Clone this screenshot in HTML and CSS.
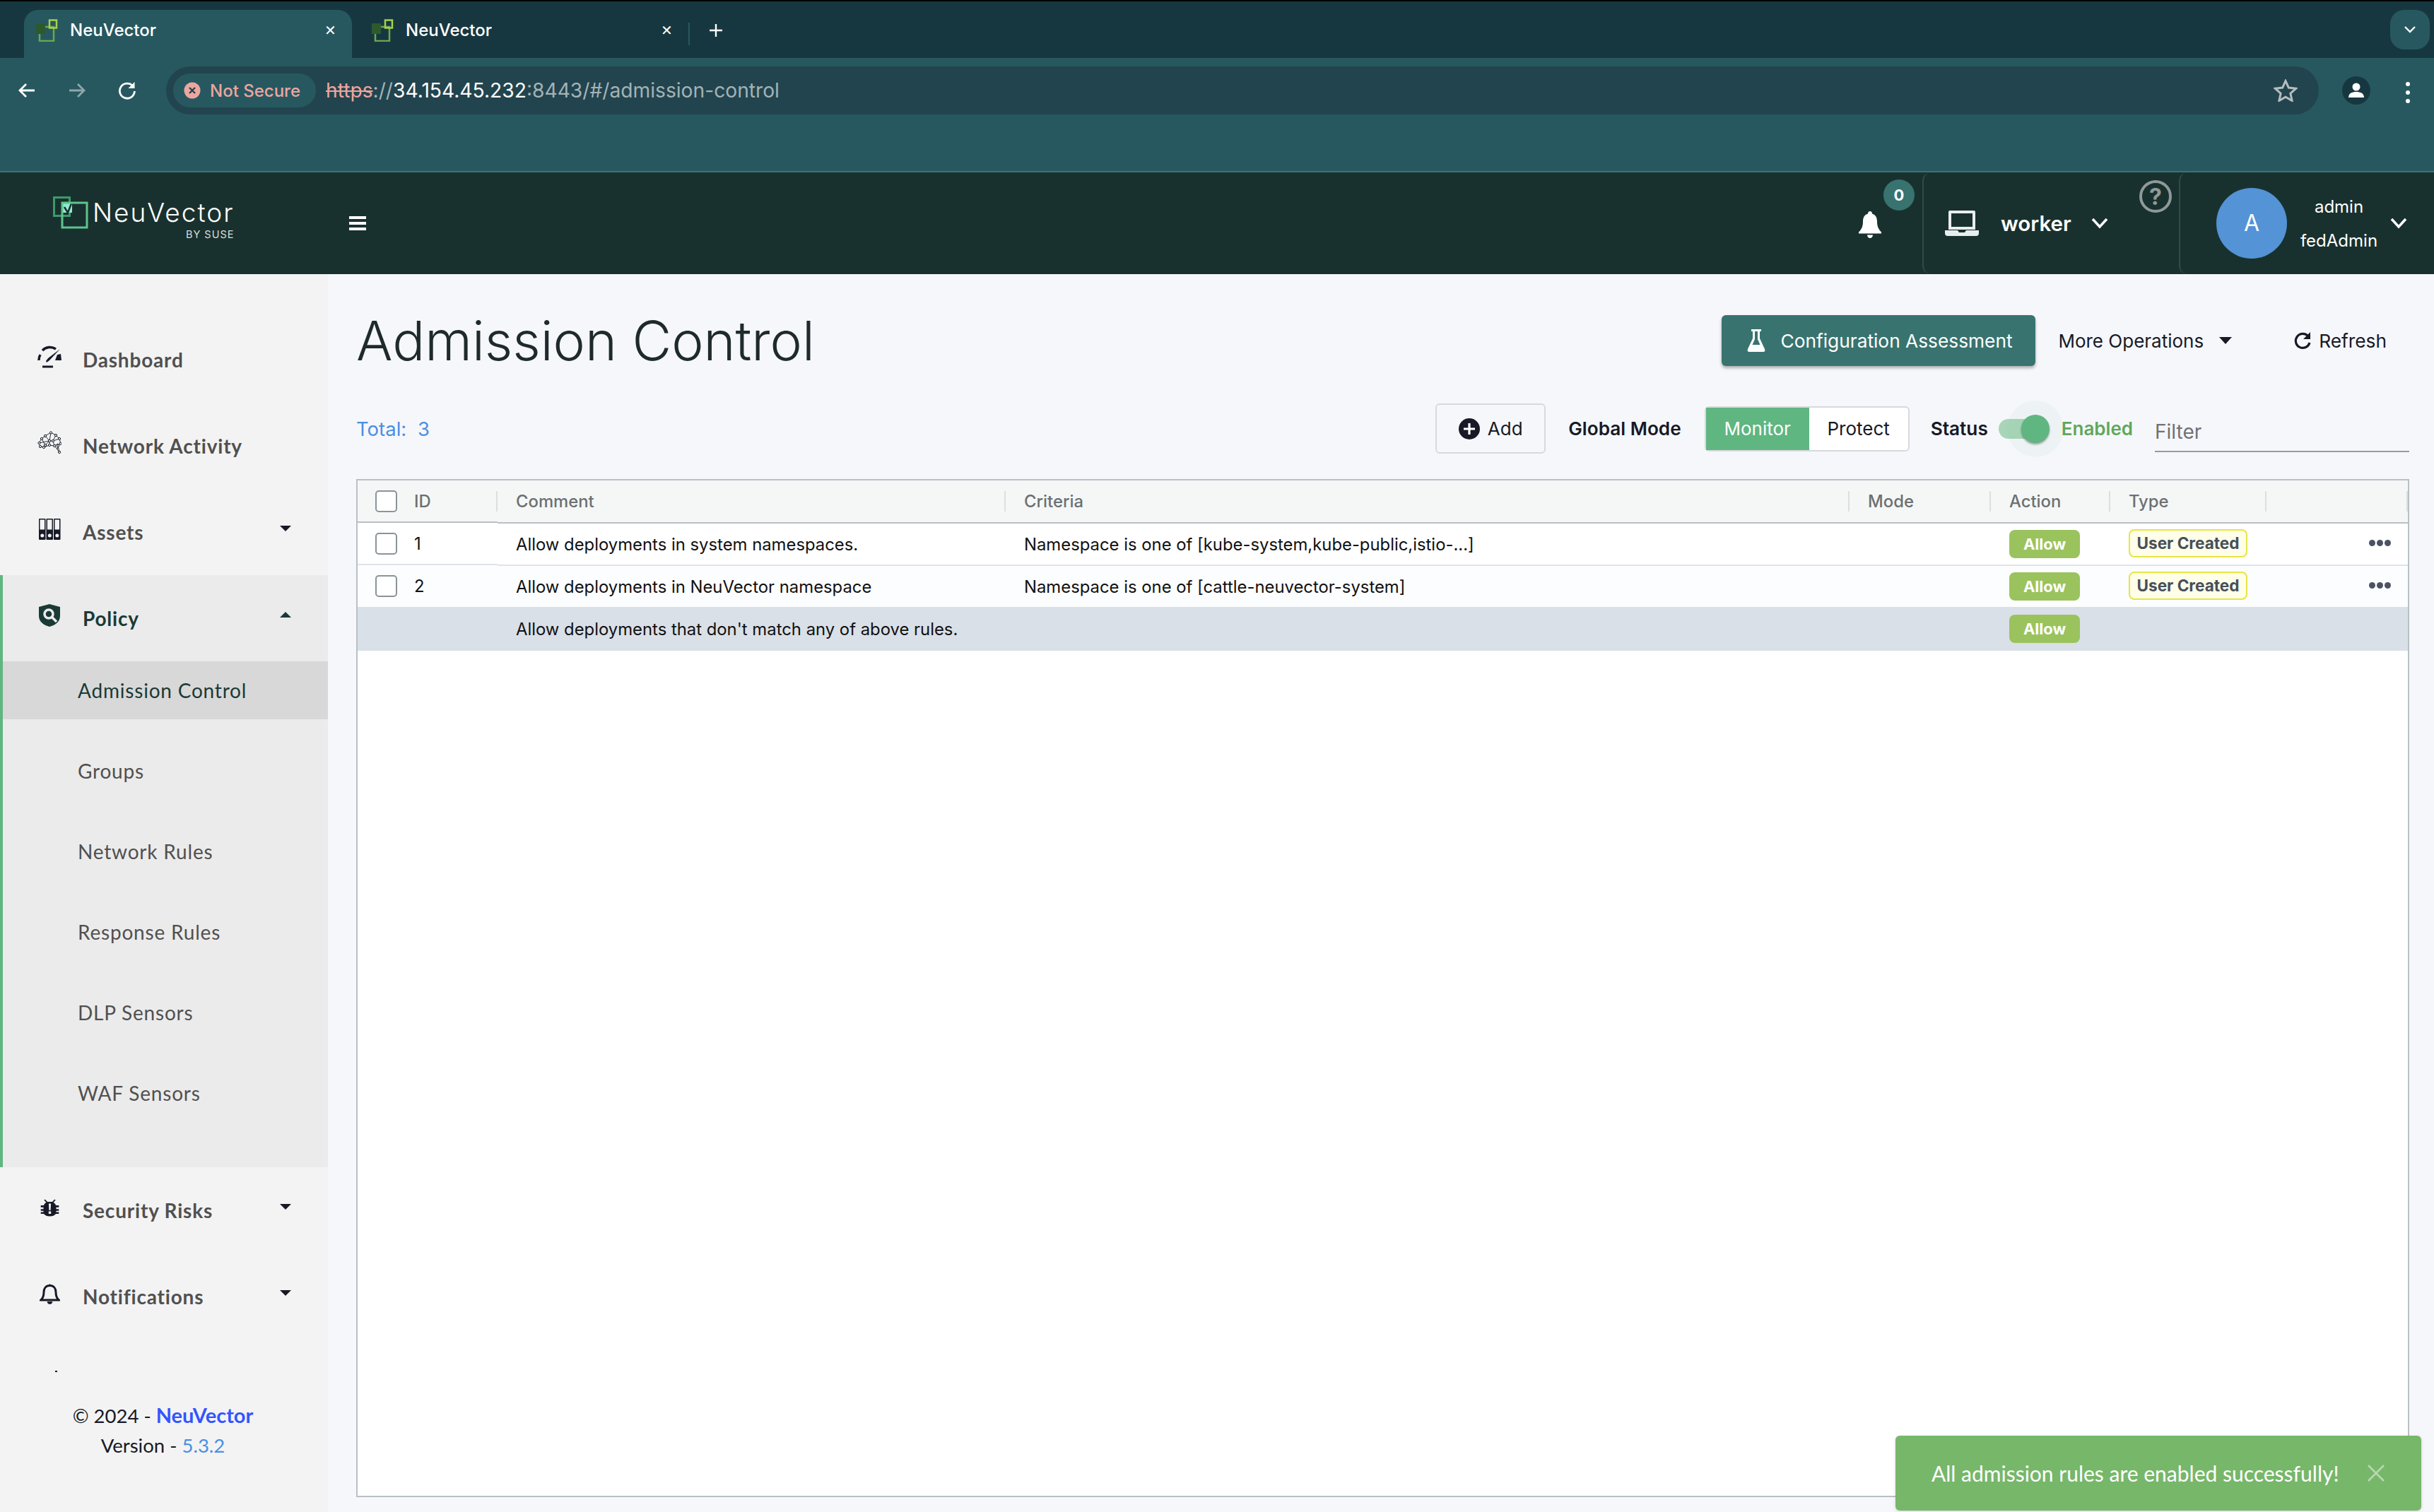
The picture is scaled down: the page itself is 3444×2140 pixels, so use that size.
FILE: index.html
```html
<!DOCTYPE html>
<html lang="en">
<head>
  <meta charset="UTF-8" />
  <title>NeuVector</title>
  <link rel="stylesheet" href="styles.css">
</head>
<body>

  <!-- Browser chrome -->
  <div class="tabstrip">
    <div class="tab tab-active">
      <svg class="favicon" viewBox="0 0 32 32"><rect x="6" y="11" width="20" height="20" fill="none" stroke="#6aa84f" stroke-width="2.5"/><rect x="1" y="6" width="13" height="15" fill="#2c5a2e"/><rect x="20" y="1.500" width="10" height="11" fill="none" stroke="#a7d04a" stroke-width="2.5"/></svg>
      <span class="tab-title">NeuVector</span>
      <span class="tab-close">✕</span>
    </div>
    <div class="tab tab-second">
      <svg class="favicon" viewBox="0 0 32 32"><rect x="6" y="11" width="20" height="20" fill="none" stroke="#6aa84f" stroke-width="2.5"/><rect x="1" y="6" width="13" height="15" fill="#2c5a2e"/><rect x="20" y="1.500" width="10" height="11" fill="none" stroke="#a7d04a" stroke-width="2.5"/></svg>
      <span class="tab-title">NeuVector</span>
      <span class="tab-close">✕</span>
    </div>
    <span class="tab-sep"></span>
    <span class="tab-plus">
      <svg viewBox="0 0 20 20" width="20" height="20"><path d="M10 1v18M1 10h18" stroke="#fff" stroke-width="2.4"/></svg>
    </span>
    <span class="tab-menu">
      <svg viewBox="0 0 16 10" width="16" height="10"><path d="M1 1l7 7 7-7" fill="none" stroke="#fff" stroke-width="2.4"/></svg>
    </span>
  </div>

  <div class="toolbar">
    <div class="nav-btns">
      <svg viewBox="0 0 26 26" width="26" height="26"><path d="M24 13H3M12 4l-9 9 9 9" fill="none" stroke="#fff" stroke-width="2.8"/></svg>
      <svg viewBox="0 0 26 26" width="26" height="26"><path d="M2 13h21M14 4l9 9-9 9" fill="none" stroke="#8fa6aa" stroke-width="2.8"/></svg>
      <svg viewBox="0 0 26 26" width="26" height="26"><path d="M21 7a10.5 10.5 0 1 0 2.4 7" fill="none" stroke="#fff" stroke-width="2.8"/><path d="M23.5 1v9h-9z" fill="#fff"/></svg>
    </div>
    <div class="omnibox">
      <div class="not-secure">
        <svg viewBox="0 0 24 24" width="24" height="24"><circle cx="12" cy="12" r="11.5" fill="#eca69f"/><path d="M8 8l8 8M16 8l-8 8" stroke="#22444e" stroke-width="2.4"/></svg>
        <span>Not Secure</span>
      </div>
      <div class="url"><span class="url-https">https</span><span class="url-dim">://</span><span class="url-host">34.154.45.232</span><span class="url-dim">:8443/#/admission-control</span></div>
      <svg class="star" viewBox="0 0 34 32" width="34" height="32"><path d="M17 2.5l4.3 9.6 10.4 1.1-7.8 7 2.2 10.3-9.1-5.300-9.100 5.300 2.200-10.300-7.800-7 10.400-1.100z" fill="none" stroke="#b4bdbf" stroke-width="3"/></svg>
    </div>
    <div class="profile">
      <svg viewBox="0 0 24 24" width="24" height="24"><circle cx="12" cy="7" r="5.500" fill="#fff"/><path d="M1 22c0-6 5-8 11-8s11 2 11 8z" fill="#fff"/></svg>
    </div>
    <div class="kebab"><i></i><i></i><i></i></div>
  </div>

  <!-- App header -->
  <header class="app-header">
    <div class="logo">
      <svg class="logo-mark" viewBox="0 0 50 46"><rect x="1.500" y="1.500" width="22" height="26" fill="none" stroke="#3c9a6b" stroke-width="3"/><rect x="12" y="9" width="15" height="14" fill="#8eeccd"/><path d="M16 15l5 8 5-13" fill="none" stroke="#19312e" stroke-width="2.500"/><rect x="13" y="9" width="35" height="35" fill="none" stroke="#5fc48f" stroke-width="3"/></svg>
      <div class="logo-text">
        <span class="logo-name">NeuVector</span>
        <span class="logo-sub">BY SUSE</span>
      </div>
    </div>
    <div class="hamburger"><i></i><i></i><i></i></div>
    <div class="header-right">
      <div class="bell-wrap">
        <svg viewBox="0 0 32 38" width="32" height="38"><path d="M16 0c2 0 3 1.500 3 3.500 5 1.500 7 5.500 7 11 0 7 2 11 6 15v2H0v-2c4-4 6-8 6-15 0-5.500 2-9.500 7-11C13 1.500 14 0 16 0zM12 33.500h8c0 2.500-2 4.500-4 4.500s-4-2-4-4.500z" fill="#fff"/></svg>
        <span class="bell-badge">0</span>
      </div>
      <div class="cluster">
        <svg viewBox="0 0 48 38" width="48" height="38"><path d="M7 1h34a2 2 0 0 1 2 2v25H5V3a2 2 0 0 1 2-2zm2 4v19h30V5z" fill="#e8eded"/><path d="M0 29h18l2 3h8l2-3h18v4a4 4 0 0 1-4 4H4a4 4 0 0 1-4-4z" fill="#e8eded"/></svg>
        <span class="cluster-name">worker</span>
        <svg class="chev" viewBox="0 0 24 16" width="24" height="16"><path d="M2 2l10 11L22 2" fill="none" stroke="#fff" stroke-width="3.500"/></svg>
        <span class="help">?</span>
      </div>
      <div class="user">
        <span class="avatar">A</span>
        <div class="user-text">
          <span>admin</span>
          <span>fedAdmin</span>
        </div>
        <svg class="chev" viewBox="0 0 24 16" width="24" height="16"><path d="M2 2l10 11L22 2" fill="none" stroke="#fff" stroke-width="3.500"/></svg>
      </div>
    </div>
  </header>

  <div class="layout">
    <!-- Sidebar -->
    <aside class="sidebar">
      <nav>
        <a class="nav-item">
          <svg class="nav-icon" viewBox="0 0 34 34"><path d="M2 22a15 15 0 0 1 2-8M7 8a15 15 0 0 1 19-2" fill="none" stroke="#171a26" stroke-width="3.500"/><path d="M32 6L17 22l-4 3-1-2 3-4z" fill="#171a26"/><path d="M28 14l5-1 1 9h-9z" fill="#171a26"/><path d="M7 31h15" stroke="#171a26" stroke-width="3"/></svg>
          <span>Dashboard</span>
        </a>
        <a class="nav-item">
          <svg class="nav-icon" viewBox="0 0 34 34"><g fill="none" stroke="#171a26" stroke-width="0.9"><path d="M2 17L6 11l5-4 8-5 7 4 5 5 2 7-4 3 2 9M2 17l2 5 5 1 8-3 7 1 4 5 3 4M6 11l5 9 6-6 5 0 4-8M11 7l6 7 2-12M22 14l9-3M22 14l2 7M17 14l0 6M2 17l15-3M28 26l1-8-5 3"/></g><g fill="#f3f3f3" stroke="#171a26" stroke-width="1"><circle cx="2.500" cy="17" r="1.600"/><circle cx="6" cy="11" r="1.600"/><circle cx="11" cy="7" r="1.600"/><circle cx="19" cy="2.500" r="1.600"/><circle cx="26" cy="6" r="1.600"/><circle cx="31" cy="11" r="1.600"/><circle cx="32.500" cy="18" r="1.600"/><circle cx="29" cy="21" r="1.600"/><circle cx="31" cy="30" r="1.600"/><circle cx="22" cy="14" r="1.600"/><circle cx="17" cy="14" r="1.600"/><circle cx="17" cy="20" r="1.600"/><circle cx="24" cy="21" r="1.600"/><circle cx="9" cy="23" r="1.600"/><circle cx="4" cy="22" r="1.600"/><circle cx="11" cy="20" r="1.600"/></g></svg>
          <span>Network Activity</span>
        </a>
        <a class="nav-item">
          <svg class="nav-icon" viewBox="0 0 34 34"><g fill="#171a26"><rect x="2" y="2" width="9.500" height="30" rx="1"/><rect x="12.500" y="2" width="9.500" height="30" rx="1"/><rect x="23" y="2" width="9.500" height="30" rx="1"/></g><g fill="#f3f3f3"><rect x="3.500" y="3.500" width="6.500" height="14"/><rect x="14" y="3.500" width="6.500" height="14"/><rect x="24.500" y="3.500" width="6.500" height="14"/><circle cx="6.800" cy="26" r="2.500"/><circle cx="17.300" cy="26" r="2.500"/><circle cx="27.800" cy="26" r="2.500"/></g></svg>
          <span>Assets</span>
          <i class="caret"></i>
        </a>
        <div class="nav-group">
          <a class="nav-item nav-open">
            <svg class="nav-icon" viewBox="0 0 34 34"><path d="M17 1l15 4v13c0 8-7 13-15 15C9 31 2 26 2 18V5z" fill="#1a3a36"/><circle cx="16" cy="15" r="6" fill="none" stroke="#ebebeb" stroke-width="3.500"/><path d="M20 19l7 7" stroke="#ebebeb" stroke-width="3.500"/></svg>
            <span>Policy</span>
            <i class="caret caret-up"></i>
          </a>
          <a class="sub-item sub-active">Admission Control</a>
          <a class="sub-item">Groups</a>
          <a class="sub-item">Network Rules</a>
          <a class="sub-item">Response Rules</a>
          <a class="sub-item">DLP Sensors</a>
          <a class="sub-item">WAF Sensors</a>
        </div>
        <a class="nav-item">
          <svg class="nav-icon nav-icon-small" viewBox="0 0 34 34"><path d="M9 3l4 4h8l4-4 1.500 1.500-3.500 3.500c2 1.500 3.500 3 4 5h5v3h-4.500v3H32v3h-4.500v2H32v3h-5c-2 3-6 4-10 4s-8-1-10-4H2v-3h4.500v-2H2v-3h4.500v-3H2v-3h5c.5-2 2-3.500 4-5L7.500 4.500z" fill="#171a26"/><path d="M15.200 10h3.600l-.6 11h-2.400zM15 23h4v4h-4z" fill="#f3f3f3"/></svg>
          <span>Security Risks</span>
          <i class="caret"></i>
        </a>
        <a class="nav-item">
          <svg class="nav-icon nav-icon-small" viewBox="0 0 34 34"><path d="M17 3c6.500 0 10 4.500 10 11 0 6 1.500 10 5 13H2c3.500-3 5-7 5-13 0-6.500 3.500-11 10-11z" fill="none" stroke="#171a26" stroke-width="3.500"/><path d="M17 0v3M13 30h8c0 2-2 3.500-4 3.500S13 32 13 30z" fill="#171a26" stroke="#171a26" stroke-width="1"/></svg>
          <span>Notifications</span>
          <i class="caret"></i>
        </a>
      </nav>
      <span class="side-dot"></span>
      <footer class="side-footer">
        <div>© 2024 - <a class="brand-link">NeuVector</a></div>
        <div>Version - <a class="version-link">5.3.2</a></div>
      </footer>
    </aside>

    <!-- Main content -->
    <main class="content">
      <div class="title-row">
        <h1>Admission Control</h1>
        <div class="title-actions">
          <button class="btn-config">
            <svg viewBox="0 0 26 34" width="26" height="34"><path d="M6 1h14v3h-2v10l7 15c1 2.500 0 4-2 4H3c-2 0-3-1.500-2-4l7-15V4H6zm5 3v11l-3.500 8h11L15 15V4z" fill="#fff"/></svg>
            Configuration Assessment
          </button>
          <span class="more-ops">More Operations <i class="more-caret"></i></span>
          <span class="refresh">
            <svg viewBox="0 0 26 28" width="26" height="28"><path d="M21 8a10 10 0 1 0 2 9" fill="none" stroke="#171a26" stroke-width="3.200"/><path d="M24 2v10H14z" fill="#171a26"/></svg>
            Refresh
          </span>
        </div>
      </div>

      <div class="tools-row">
        <div class="total">Total: <span class="total-num">3</span></div>
        <div class="tools">
          <button class="btn-add">
            <svg viewBox="0 0 30 30" width="30" height="30"><circle cx="15" cy="15" r="15" fill="#171a26"/><path d="M15 7v16M7 15h16" stroke="#fff" stroke-width="3.200"/></svg>
            Add
          </button>
          <span class="tool-label">Global Mode</span>
          <div class="segment">
            <span class="seg-on">Monitor</span>
            <span class="seg-off">Protect</span>
          </div>
          <span class="tool-label status-label">Status</span>
          <div class="switch"><span class="switch-thumb"></span></div>
          <span class="switch-text">Enabled</span>
          <div class="filter">Filter</div>
        </div>
      </div>

      <div class="grid-box">
        <table class="grid">
          <colgroup>
            <col class="c-id"><col class="c-comment"><col class="c-criteria"><col class="c-mode"><col class="c-action"><col class="c-type"><col class="c-menu">
          </colgroup>
          <thead>
            <tr>
              <th class="cell-id"><span class="check"></span>ID</th>
              <th>Comment</th>
              <th>Criteria</th>
              <th>Mode</th>
              <th>Action</th>
              <th>Type</th>
              <th></th>
            </tr>
          </thead>
          <tbody>
            <tr class="row-one">
              <td class="cell-id"><span class="check"></span>1</td>
              <td>Allow deployments in system namespaces.</td>
              <td>Namespace is one of [kube-system,kube-public,istio-...]</td>
              <td></td>
              <td><span class="tag-allow">Allow</span></td>
              <td><span class="tag-user">User Created</span></td>
              <td class="cell-menu"><span class="dots"><i></i><i></i><i></i></span></td>
            </tr>
            <tr class="row-two">
              <td class="cell-id"><span class="check"></span>2</td>
              <td>Allow deployments in NeuVector namespace</td>
              <td>Namespace is one of [cattle-neuvector-system]</td>
              <td></td>
              <td><span class="tag-allow">Allow</span></td>
              <td><span class="tag-user">User Created</span></td>
              <td class="cell-menu"><span class="dots"><i></i><i></i><i></i></span></td>
            </tr>
            <tr class="row-default">
              <td></td>
              <td>Allow deployments that don't match any of above rules.</td>
              <td></td>
              <td></td>
              <td><span class="tag-allow">Allow</span></td>
              <td></td>
              <td></td>
            </tr>
          </tbody>
        </table>
      </div>
    </main>
  </div>

  <div class="toast">
    <span>All admission rules are enabled successfully!</span>
    <svg viewBox="0 0 26 26" width="26" height="26"><path d="M2 2l22 22M24 2L2 24" stroke="#b9d8b0" stroke-width="2.500"/></svg>
  </div>

</body>
</html>
```

FILE: styles.css
```css
* {
  box-sizing: border-box;
}

html, body {
  margin: 0;
  padding: 0;
  height: 2140px;
  overflow: hidden;
}

body {
  position: relative;
  display: flex;
  flex-direction: column;
  font-family: "Inter", sans-serif;
  background-color: #f6f7fb;
}

/* Browser chrome */
.tabstrip {
  display: flex;
  align-items: flex-end;
  height: 82px;
  padding-left: 34px;
  padding-right: 6px;
  background-color: #173740;
  border-top: 2px solid #000;
}

.tab {
  display: flex;
  align-items: center;
  width: 464px;
  height: 68px;
  padding: 0 22px 11px 16px;
  color: #fff;
  font-size: 24px;
  font-weight: 500;
  border-radius: 20px 20px 0 0;
}

.tab-active {
  background-color: #275860;
}

.tab-second {
  width: 476px;
  padding-left: 27px;
}

.favicon {
  width: 32px;
  height: 32px;
  margin-right: 17px;
}

.tab-title {
  flex: 1;
}

.tab-close {
  font-size: 20px;
  line-height: 1;
}

.tab-sep {
  width: 2px;
  height: 32px;
  margin: 0 0 18px 0;
  background-color: #275860;
}

.tab-plus {
  display: flex;
  height: 68px;
  align-items: center;
  padding: 0 0 11px 27px;
}

.tab-menu {
  display: flex;
  align-items: center;
  justify-content: center;
  width: 56px;
  height: 56px;
  margin-left: auto;
  margin-bottom: 12px;
  background-color: #275860;
  border-radius: 20px;
}

.toolbar {
  display: flex;
  align-items: flex-start;
  height: 162px;
  padding-top: 12px;
  background-color: #275860;
  border-bottom: 2px solid #3f7278;
}

.nav-btns {
  display: flex;
  align-items: center;
  gap: 45px;
  width: 235px;
  height: 68px;
  padding-left: 25px;
}

.omnibox {
  display: flex;
  align-items: center;
  width: 3046px;
  height: 68px;
  padding: 0 30px 0 10px;
  background-color: #22444e;
  border-radius: 34px;
}

.not-secure {
  display: flex;
  align-items: center;
  gap: 13px;
  height: 48px;
  padding: 0 22px 0 15px;
  color: #eca69f;
  font-size: 24px;
  font-weight: 500;
  background-color: #275860;
  border-radius: 24px;
}

.url {
  flex: 1;
  margin-left: 14px;
  font-size: 28.2px;
  color: #a3b3b6;
}

.url-https {
  color: #eca69f;
  text-decoration: line-through;
}

.url-host {
  color: #fff;
}

.profile {
  display: flex;
  align-items: center;
  justify-content: center;
  width: 40px;
  height: 40px;
  margin: 14px 0 0 33px;
  background-color: #173740;
  border-radius: 50%;
}

.kebab {
  display: flex;
  flex-direction: column;
  gap: 6px;
  margin: 22px 0 0 50px;
}

.kebab i {
  display: block;
  width: 6px;
  height: 6px;
  background-color: #fff;
  border-radius: 50%;
}

/* App header */
.app-header {
  display: flex;
  align-items: center;
  height: 144px;
  background-color: #19312e;
}

.logo {
  display: flex;
  align-items: flex-start;
  width: 494px;
  padding: 0 0 15px 75px;
}

.logo-mark {
  width: 50px;
  height: 46px;
}

.logo-text {
  display: flex;
  flex-direction: column;
  align-items: flex-end;
  margin-left: 6px;
  color: #fff;
}

.logo-name {
  font-size: 37px;
  font-weight: 300;
  line-height: 45px;
  letter-spacing: 2px;
}

.logo-sub {
  font-size: 14.5px;
  letter-spacing: 1px;
  color: #d8dedd;
}

.hamburger {
  display: flex;
  flex-direction: column;
  gap: 4px;
}

.hamburger i {
  display: block;
  width: 24px;
  height: 4px;
  background-color: #fff;
}

.header-right {
  display: flex;
  align-items: stretch;
  height: 100%;
  margin-left: auto;
}

.bell-wrap {
  position: relative;
  display: flex;
  align-items: center;
  width: 90px;
}

.bell-wrap svg {
  margin-top: 4px;
}

.bell-badge {
  position: absolute;
  top: 10px;
  left: 35px;
  width: 44px;
  height: 44px;
  color: #fff;
  font-size: 22px;
  font-weight: 700;
  line-height: 44px;
  text-align: center;
  background-color: #38736f;
  border-radius: 50%;
}

.cluster {
  position: relative;
  display: flex;
  align-items: center;
  width: 363px;
  padding-left: 30px;
  border-left: 2px solid #33494a;
  border-radius: 12px 0 0 12px;
}

.cluster-name {
  margin-left: 31px;
  color: #fff;
  font-size: 29.5px;
  font-weight: 600;
}

.cluster .chev {
  margin-left: 28px;
}

.help {
  position: absolute;
  top: 11px;
  left: 305px;
  width: 46px;
  height: 46px;
  color: #8e9a99;
  font-size: 32px;
  font-weight: 700;
  line-height: 40px;
  text-align: center;
  border: 4px solid #8e9a99;
  border-radius: 50%;
}

.user {
  display: flex;
  align-items: center;
  width: 361px;
  padding-left: 51px;
  border-left: 2px solid #33494a;
  border-radius: 12px 0 0 12px;
}

.avatar {
  width: 100px;
  height: 100px;
  color: #fff;
  font-size: 32px;
  line-height: 100px;
  text-align: center;
  background-color: #5393d6;
  border-radius: 50%;
}

.user-text {
  display: flex;
  flex-direction: column;
  align-items: center;
  gap: 18px;
  width: 105px;
  margin-left: 21px;
  margin-top: 2px;
  color: #fff;
  font-size: 24px;
  line-height: 30px;
}

.user .chev {
  margin-left: 20px;
}

/* Sidebar + main */
.layout {
  display: flex;
  flex: 1;
  min-height: 0;
}

.sidebar {
  display: flex;
  flex-direction: column;
  width: 464px;
  padding-top: 60px;
  font-family: "Lato", sans-serif;
  background-color: #f3f3f3;
}

.nav-item {
  display: flex;
  align-items: center;
  height: 122px;
  padding: 0 52px 0 53px;
  color: #505050;
  font-size: 28px;
  font-weight: 700;
  letter-spacing: 0.8px;
}

.nav-icon {
  width: 34px;
  height: 34px;
  margin-right: 30px;
  margin-top: -8px;
}

.nav-icon-small {
  width: 29px;
  height: 29px;
  margin-left: 3px;
  margin-right: 32px;
}

.caret {
  width: 0;
  height: 0;
  margin-left: auto;
  margin-top: -10px;
  border-left: 8px solid transparent;
  border-right: 8px solid transparent;
  border-top: 8px solid #171a26;
}

.caret-up {
  border-top: 0;
  border-bottom: 8px solid #1a3a36;
}

.nav-group {
  padding-bottom: 64px;
  background-color: #ebebeb;
  border-left: 4px solid #5fb681;
}

.nav-open {
  padding-left: 49px;
  color: #1a3a36;
}

.sub-item {
  display: flex;
  align-items: center;
  height: 82px;
  margin-top: 32px;
  padding-left: 106px;
  color: #505050;
  font-size: 28px;
  letter-spacing: 0.8px;
}

.sub-active {
  margin-top: 0;
  color: #1a3a36;
  background-color: #d8d8d8;
}

.side-dot {
  width: 3px;
  height: 2px;
  margin: 44px 0 0 78px;
  background-color: #171a26;
}

.side-footer {
  margin-top: 40px;
  padding-right: 3px;
  color: #171a26;
  font-size: 27.5px;
  line-height: 42px;
  text-align: center;
}

.brand-link {
  color: #3355ff;
  font-size: 29px;
  font-weight: 700;
}

.version-link {
  color: #4a90e2;
}

.content {
  display: flex;
  flex: 1;
  flex-direction: column;
  min-width: 0;
  padding: 58px 35px 21px 40px;
}

.title-row {
  display: flex;
  align-items: center;
  justify-content: space-between;
  height: 72px;
}

h1 {
  margin: 0;
  color: #1f2a2b;
  font-size: 76.5px;
  font-weight: 300;
}

.title-actions {
  display: flex;
  align-items: center;
  padding-right: 32px;
  color: #171a26;
  font-size: 26px;
}

.btn-config {
  display: flex;
  align-items: center;
  gap: 21px;
  width: 444px;
  height: 72px;
  padding: 0 0 0 36px;
  color: #fff;
  font-family: inherit;
  font-size: 26.3px;
  background-color: #38736f;
  border: none;
  border-radius: 6px;
  box-shadow: 0 3px 4px rgba(0, 0, 0, 0.3);
}

.more-ops {
  display: flex;
  align-items: center;
  margin-left: 32px;
}

.more-caret {
  width: 0;
  height: 0;
  margin-left: 22px;
  border-left: 9px solid transparent;
  border-right: 9px solid transparent;
  border-top: 10px solid #171a26;
}

.refresh {
  display: flex;
  align-items: center;
  gap: 10px;
  margin-left: 87px;
  font-size: 26.3px;
}

.tools-row {
  display: flex;
  align-items: center;
  justify-content: space-between;
  height: 71px;
  margin-top: 53px;
}

.total {
  color: #4a90e2;
  font-size: 27.5px;
}

.total-num {
  margin-left: 8px;
}

.tools {
  display: flex;
  align-items: center;
  color: #171a26;
  font-size: 26px;
}

.btn-add {
  display: flex;
  align-items: center;
  justify-content: center;
  gap: 11px;
  width: 156px;
  height: 71px;
  color: #171a26;
  font-family: inherit;
  font-size: 26px;
  background-color: #f6f7fb;
  border: 2px solid #d8d9de;
  border-radius: 6px;
}

.tool-label {
  margin-left: 32px;
  font-size: 26.2px;
  font-weight: 600;
}

.status-label {
  margin-left: 30px;
}

.segment {
  display: flex;
  width: 290px;
  height: 64px;
  margin-left: 33px;
  background-color: #fff;
  border: 2px solid #d8d9de;
  border-radius: 6px;
}

.seg-on, .seg-off {
  display: flex;
  align-items: center;
  justify-content: center;
}

.seg-on {
  width: 146px;
  color: #fff;
  background-color: #5fb681;
}

.seg-off {
  flex: 1;
}

.switch {
  position: relative;
  width: 69px;
  height: 28px;
  margin-left: 15px;
  background-color: #a8d5b8;
  border-radius: 14px;
}

.switch-thumb {
  position: absolute;
  top: -6px;
  right: -3px;
  width: 40px;
  height: 40px;
  background-color: #5fb681;
  border-radius: 50%;
  box-shadow: 0 2px 3px rgba(0, 0, 0, 0.35), 0 0 0 20px rgba(95, 182, 129, 0.06);
}

.switch-text {
  margin-left: 20px;
  color: #5fa85a;
  font-weight: 600;
}

.filter {
  width: 360px;
  height: 64px;
  margin-top: 2px;
  margin-left: 31px;
  padding-top: 18px;
  color: #6f7275;
  font-size: 28px;
  border-bottom: 2px solid #999;
}

/* Rules table */
.grid-box {
  flex: 1;
  margin-top: 36px;
  background-color: #fff;
  border: 2px solid #b9c0c5;
}

.grid {
  width: 100%;
  table-layout: fixed;
  border-collapse: collapse;
  font-size: 23.85px;
}

.c-id { width: 198px; }
.c-comment { width: 719px; }
.c-criteria { width: 1194px; }
.c-mode { width: 200px; }
.c-action { width: 169px; }
.c-type { width: 221px; }
.c-menu { width: 200px; }

th {
  position: relative;
  height: 60px;
  padding: 0 26px;
  color: #6c7072;
  font-weight: 500;
  text-align: left;
  background-color: #f5f7f6;
  border-bottom: 2px solid #b9c0c5;
}

th::after {
  content: "";
  position: absolute;
  top: 15px;
  right: 0;
  width: 2px;
  height: 29px;
  background-color: #dcdfe0;
}

td {
  height: 60px;
  padding: 0 26px;
  color: #111;
}

.row-one td {
  border-bottom: 2px solid #dfe3e8;
}

.row-two td {
  height: 59px;
  background-color: #fcfdfe;
}

.row-default td {
  height: 62px;
  background-color: #d9e0e8;
}

.cell-id {
  display: flex;
  align-items: center;
  padding-left: 25px;
}

.check {
  display: inline-block;
  width: 31px;
  height: 31px;
  margin-right: 24px;
  background-color: #fff;
  border: 2px solid #8a9498;
  border-radius: 5px;
}

.tag-allow {
  display: inline-block;
  width: 100px;
  height: 40px;
  color: #fff;
  font-size: 22px;
  font-weight: 700;
  line-height: 40px;
  text-align: center;
  vertical-align: middle;
  background-color: #9ac35e;
  border-radius: 8px;
}

.tag-user {
  display: inline-block;
  width: 168px;
  height: 40px;
  margin-top: -2px;
  color: #474f5c;
  font-size: 22.6px;
  font-weight: 700;
  line-height: 36px;
  text-align: center;
  vertical-align: middle;
  background-color: #fffee8;
  border: 2px solid #e8e445;
  border-radius: 8px;
}

.cell-menu {
  text-align: right;
  padding-right: 24px;
}

.dots {
  display: inline-flex;
  gap: 2px;
  margin-top: -6px;
  vertical-align: middle;
}

.dots i {
  display: block;
  width: 9px;
  height: 9px;
  background-color: #4a5263;
  border-radius: 50%;
}

/* Toast */
.toast {
  position: absolute;
  right: 18px;
  bottom: 2px;
  display: flex;
  align-items: center;
  justify-content: space-between;
  width: 744px;
  height: 106px;
  padding: 0 51px;
  color: #fff;
  font-family: "Lato", sans-serif;
  font-size: 30px;
  background-color: #77b76a;
  border-radius: 6px;
  box-shadow: 0 1px 4px rgba(0, 0, 0, 0.15);
}
```
